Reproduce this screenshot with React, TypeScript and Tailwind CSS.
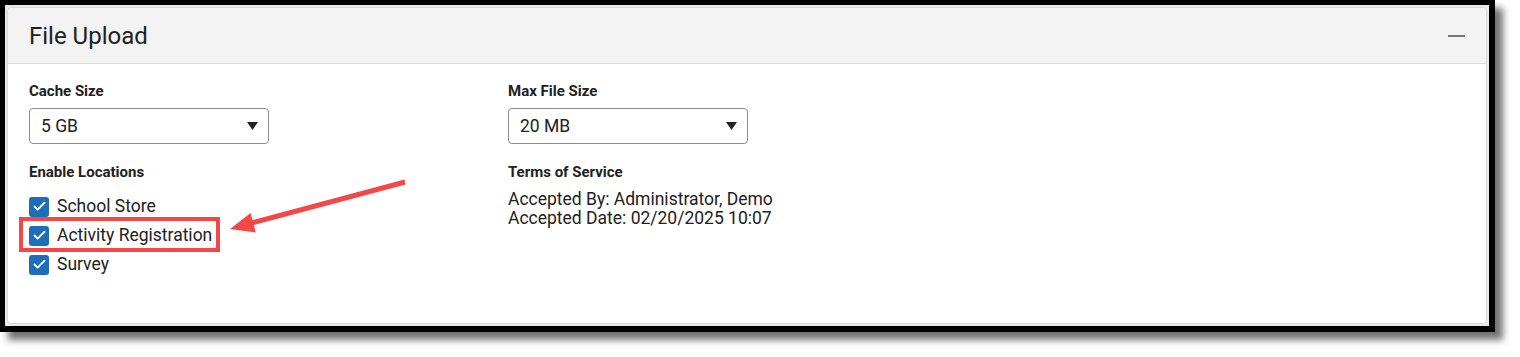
import { Check } from "lucide-react";

const SelectBox = ({ value }: { value: string }) => {
	return (
		<div className="flex h-[36px] w-[240px] items-center justify-between rounded-[4px] border border-[#8c8c8c] bg-white pl-[11px] pr-[10px] text-[17.5px] text-[#212121]">
			<span>{value}</span>
			{/* caret */}
			<svg width="11" height="8" viewBox="0 0 11 8">
				<polygon points="0,0 11,0 5.5,8" fill="#222" />
			</svg>
		</div>
	);
};

const CheckRow = ({ label }: { label: string }) => {
	return (
		<div className="flex h-[29px] items-center gap-[8px]">
			<span className="flex h-[20px] w-[20px] items-center justify-center rounded-[3px] bg-[#1d6db8]">
				<Check size={15} strokeWidth={3} color="white" />
			</span>
			<span className="text-[17.5px] text-[#212121]">{label}</span>
		</div>
	);
};

const App = () => {
	return (
		<div
			className="relative h-[357px] w-[1520px] bg-white"
			style={{ fontFamily: "Roboto, 'Liberation Sans', sans-serif" }}>
			{/* Screenshot frame */}
			<div className="h-[332px] w-[1495px] border-t-[5px] border-l-[5px] border-r-[6px] border-b-[6px] border-black bg-[#e9e9e9] p-[2px] shadow-[8px_8px_7px_rgba(0,0,0,0.55)]">
				<div className="flex h-full flex-col overflow-hidden rounded-[4px] border border-[#d9d9d9] bg-white">
					{/* Header */}
					<div className="flex h-[56px] shrink-0 items-center justify-between border-b border-[#dcdcdc] bg-[#f3f3f3] pl-[21px] pr-[21px]">
						<h2 className="text-[24px] text-[#212121]">File Upload</h2>
						<span className="mt-[1px] h-[2px] w-[17px] bg-[#777]"></span>
					</div>

					{/* Body */}
					<div className="grid grid-cols-[479px_1fr] px-[21px] pt-[17px]">
						<div className="flex flex-col">
							<label className="text-[15px] leading-[20px] font-bold text-[#212121]">
								Cache Size
							</label>
							<div className="mt-[7px]">
								<SelectBox value="5 GB" />
							</div>
							<label className="mt-[18px] text-[15px] leading-[20px] font-bold text-[#212121]">
								Enable Locations
							</label>
							<div className="mt-[10px] flex flex-col">
								<CheckRow label="School Store" />
								<CheckRow label="Activity Registration" />
								<CheckRow label="Survey" />
							</div>
						</div>
						<div className="flex flex-col">
							<label className="text-[15px] leading-[20px] font-bold text-[#212121]">
								Max File Size
							</label>
							<div className="mt-[7px]">
								<SelectBox value="20 MB" />
							</div>
							<label className="mt-[18px] text-[15px] leading-[20px] font-bold text-[#212121]">
								Terms of Service
							</label>
							<div className="mt-[8px] text-[17.5px] leading-[19px] text-[#212121]">
								<div>Accepted By: Administrator, Demo</div>
								<div>Accepted Date: 02/20/2025 10:07</div>
							</div>
						</div>
					</div>
				</div>
			</div>

			{/* Annotation: highlight box and arrow */}
			<svg
				className="pointer-events-none absolute top-0 left-0"
				width="1520"
				height="357">
				<rect
					x="21"
					y="219"
					width="197"
					height="31"
					fill="none"
					stroke="#f44848"
					strokeWidth="4"
				/>
				<line
					x1="405"
					y1="182"
					x2="250"
					y2="223.5"
					stroke="#f44848"
					strokeWidth="5"
				/>
				<polygon points="230,229 250.6,213.1 255.8,232.5" fill="#f44848" />
			</svg>
		</div>
	);
};

export default App;
